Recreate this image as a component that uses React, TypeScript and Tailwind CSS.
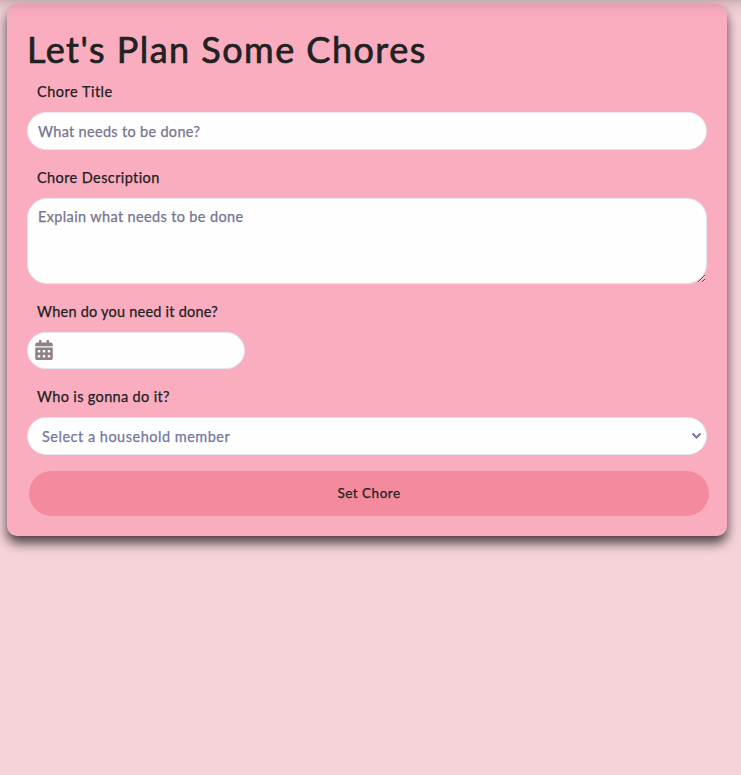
import { useState } from "react";

const labelText = "whitespace-nowrap pl-[10px] text-[14.5px] leading-5 text-[#212121] [-webkit-text-stroke:0.25px_currentColor]";
const fieldBase = "border border-[#e4e6f2] bg-[#fefefe] outline-none";

function CalendarIcon() {
  return (
    <svg width="18" height="20" viewBox="0 0 448 512" fill="#8f8287">
      <path d="M0 464c0 26.500 21.500 48 48 48h352c26.500 0 48-21.500 48-48V192H0v272zm320-196c0-6.600 5.400-12 12-12h40c6.600 0 12 5.400 12 12v40c0 6.600-5.400 12-12 12h-40c-6.600 0-12-5.400-12-12v-40zm0 128c0-6.600 5.400-12 12-12h40c6.600 0 12 5.400 12 12v40c0 6.600-5.400 12-12 12h-40c-6.600 0-12-5.400-12-12v-40zM192 268c0-6.600 5.400-12 12-12h40c6.600 0 12 5.400 12 12v40c0 6.600-5.400 12-12 12h-40c-6.600 0-12-5.400-12-12v-40zm0 128c0-6.600 5.400-12 12-12h40c6.600 0 12 5.400 12 12v40c0 6.600-5.400 12-12 12h-40c-6.600 0-12-5.400-12-12v-40zM64 268c0-6.600 5.400-12 12-12h40c6.600 0 12 5.400 12 12v40c0 6.600-5.400 12-12 12H76c-6.600 0-12-5.400-12-12v-40zm0 128c0-6.600 5.400-12 12-12h40c6.600 0 12 5.400 12 12v40c0 6.600-5.400 12-12 12H76c-6.600 0-12-5.400-12-12v-40zM400 64h-48V16c0-8.800-7.200-16-16-16h-32c-8.800 0-16 7.200-16 16v48H160V16c0-8.800-7.200-16-16-16h-32c-8.800 0-16 7.200-16 16v48H48C21.500 64 0 85.500 0 112v48h448v-48c0-26.500-21.500-48-48-48z" />
    </svg>
  );
}

export default function App() {
  const [title, setTitle] = useState("");
  const [description, setDescription] = useState("");

  return (
    <div className="relative h-[775px] w-full overflow-hidden bg-[#f5d3d9] pt-1 font-['Lato',sans-serif]">
      <div className="pointer-events-none absolute inset-x-0 top-0 h-[18px] bg-[linear-gradient(to_bottom,rgba(0,0,0,0.17),rgba(0,0,0,0.09)_4px,rgba(0,0,0,0.03)_10px,transparent)]" />
      <form className="ml-[7px] flex h-[532px] w-[720px] flex-col rounded-[10px] bg-[#fbadc0] pl-5 shadow-[0_7px_12px_rgba(0,0,0,0.7)]">
        <h1 className="mt-[22px] h-[46px] whitespace-nowrap text-[36px] leading-[46px] tracking-[1.48px] text-[#212121] [-webkit-text-stroke:0.7px_currentColor]">
          Let's Plan Some Chores
        </h1>

        <label htmlFor="title" className={`${labelText} mt-[10px] tracking-[0.5px]`}>
          Chore Title
        </label>
        <input
          id="title"
          value={title}
          onChange={(e) => setTitle(e.target.value)}
          placeholder="What needs to be done?"
          className={`${fieldBase} mt-[10px] h-[38px] w-[680px] rounded-full px-[10px] pt-px text-[14.5px] tracking-[0.31px] placeholder:text-[#77748e] [-webkit-text-stroke:0.25px_#77748e]`}
        />

        <label htmlFor="description" className={`${labelText} mt-[18px] tracking-[0.4px]`}>
          Chore Description
        </label>
        <textarea
          id="description"
          value={description}
          onChange={(e) => setDescription(e.target.value)}
          placeholder="Explain what needs to be done"
          className={`${fieldBase} mt-[10px] h-[86px] w-[680px] resize rounded-[20px] px-[10px] py-[8px] text-[14.5px] leading-5 tracking-[0.36px] placeholder:text-[#77748e] [-webkit-text-stroke:0.25px_#77748e]`}
        />

        <span className={`${labelText} mt-[18px] tracking-[0.23px]`}>When do you need it done?</span>
        <button type="button" aria-label="Choose date" className={`${fieldBase} mt-[10px] flex h-[37px] w-[218px] items-center rounded-full pl-[7px] pb-px`}>
          <CalendarIcon />
        </button>

        <span className={`${labelText} mt-[18px] tracking-[0.34px]`}>Who is gonna do it?</span>
        <button type="button" className={`${fieldBase} mt-[10px] flex h-[38px] w-[680px] items-center justify-between rounded-full pr-[4px] pl-[14px] text-[14.5px] text-[#7477a0]`}>
          <span className="whitespace-nowrap pt-px tracking-[0.5px] [-webkit-text-stroke:0.25px_currentColor]">Select a household member</span>
          <svg width="11" height="8" viewBox="0 0 11 8" fill="none" stroke="#7477a0" strokeWidth="2">
            <path d="M1.500 1.500 5.500 5.500 9.500 1.500" />
          </svg>
        </button>

        <button type="submit" className="mt-4 ml-[2px] h-[45px] w-[680px] rounded-full bg-[#f38a9d] text-[13.5px] text-[#212121]">
          <span className="whitespace-nowrap tracking-[0.5px] [-webkit-text-stroke:0.25px_currentColor]">Set Chore</span>
        </button>
      </form>
    </div>
  );
}
